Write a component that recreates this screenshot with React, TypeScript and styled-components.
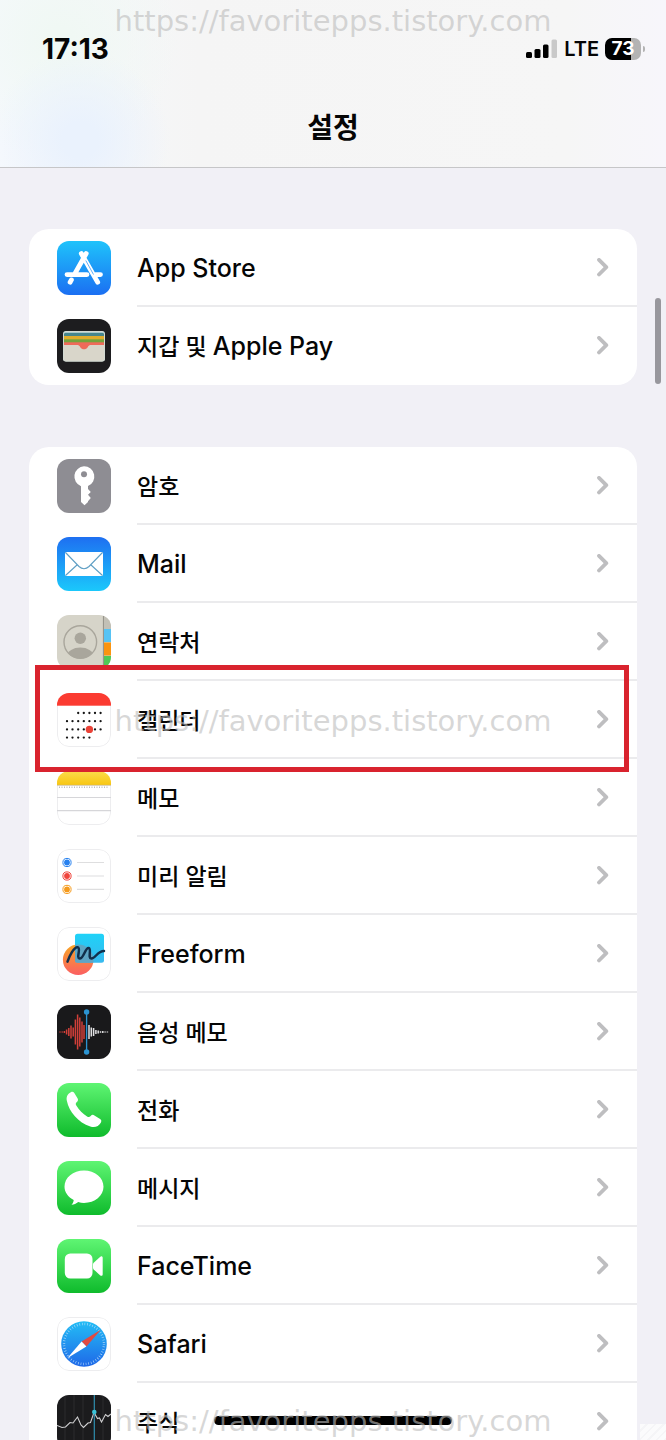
import React from "react";
import styled, { createGlobalStyle } from "styled-components";

const GlobalStyle = createGlobalStyle`
  * { box-sizing: border-box; }
  body {
    margin: 0;
    background: #f1f0f6;
    color: #050505;
    font-family: Inter, "Noto Sans CJK KR", sans-serif;
  }
`;

const Screen = styled.div`
  position: relative;
  display: flex;
  flex-direction: column;
  height: 100vh;
  overflow: hidden;
`;

const Header = styled.header`
  flex: none;
  border-bottom: 1px solid #c6c6c8;
  background:
    radial-gradient(ellipse 90px 90px at 80px 140px, #eaf2fd 20%, rgba(234, 242, 253, 0) 100%),
    radial-gradient(ellipse 120px 120px at 60px 40px, #f0f8f4 10%, rgba(240, 248, 244, 0) 100%),
    linear-gradient(90deg, #f6f9fd, #f5f5f5 30%, #f6f6f6 85%, #f7f6fb);
`;

const StatusBar = styled.div`
  display: flex;
  align-items: center;
  justify-content: space-between;
  height: 98px;
  padding: 0 22px 0 42px;
`;

const Clock = styled.time`
  font-size: 28px;
  line-height: 32px;
  font-weight: 700;
`;

const StatusGroup = styled.div`
  display: flex;
  align-items: center;
  gap: 6px;
`;

const Network = styled.span`
  font-size: 20px;
  line-height: 24px;
  font-weight: 600;
`;

const Battery = styled.span`
  position: relative;
  display: flex;
  align-items: center;
  justify-content: center;
  width: 36px;
  height: 22px;
  margin-right: 3px;
  border-radius: 7px;
  background: linear-gradient(90deg, #000 73%, #b3b3b3 73%);
  color: #fff;
  font-size: 19px;
  line-height: 22px;
  font-weight: 700;

  &::after {
    content: "";
    position: absolute;
    left: 38px;
    top: 8px;
    width: 2px;
    height: 6px;
    border-radius: 0 2px 2px 0;
    background: #b3b3b3;
  }
`;

const Title = styled.h1`
  margin: 0;
  padding: 10px 0 19px;
  font-size: 28px;
  line-height: 40px;
  font-weight: 700;
  text-align: center;
`;

const Main = styled.main`
  flex: 1;
  min-height: 0;
  overflow-y: auto;
  scrollbar-width: none;
  display: flex;
  flex-direction: column;
  gap: 62px;
  padding: 61px 29px;
`;

const Card = styled.ul`
  flex: none;
  list-style: none;
  margin: 0;
  padding: 0;
  border-radius: 20px;
  background: #fff;
`;

const Item = styled.li<{ $marked?: boolean }>`
  position: relative;

  ${(p) =>
    p.$marked &&
    `&::after {
      content: "";
      position: absolute;
      z-index: 1;
      inset: -16px 8px -13px 6px;
      border: 5px solid #d9232e;
      pointer-events: none;
    }`}
`;

const RowLink = styled.a`
  display: flex;
  align-items: center;
  gap: 26px;
  height: 78px;
  padding-left: 28px;
  color: inherit;
  text-decoration: none;
`;

const Tile = styled.svg`
  flex: none;
  width: 54px;
  height: 54px;
  border-radius: 12px;
`;

const RowBody = styled.span`
  flex: 1;
  align-self: stretch;
  display: flex;
  align-items: center;
  justify-content: space-between;
  padding: 2px 28px 0 0;
  border-bottom: 2px solid #ebebed;

  ${Item}:last-child & {
    border-bottom-color: transparent;
  }
`;

const Label = styled.span`
  font-size: 25px;
  line-height: 32px;
  font-weight: 500;
`;

const Hangul = styled.span`
  font-size: 23px;
`;

const ScrollThumb = styled.div`
  position: absolute;
  top: 298px;
  right: 5px;
  width: 6px;
  height: 86px;
  border-radius: 3px;
  background: #98979d;
`;

const HomeBar = styled.div`
  position: absolute;
  bottom: 15px;
  left: 50%;
  width: 238px;
  height: 9px;
  margin-left: -119px;
  border-radius: 5px;
  background: #000;
`;

const CornerPatch = styled.div`
  position: absolute;
  right: 0;
  bottom: 0;
  width: 26px;
  height: 16px;
  background: repeating-linear-gradient(135deg, #fbfbfc 0 4px, #f5f5f7 4px 6px);
`;

const Watermarks = styled.div`
  position: absolute;
  z-index: 2;
  inset: 0;
  display: flex;
  flex-direction: column;
  align-items: center;
  justify-content: space-between;
  padding: 3px 0 1px;
  pointer-events: none;
  color: rgba(188, 188, 188, 0.6);
  font-family: "DejaVu Sans", sans-serif;
  font-size: 29px;
  line-height: 36px;
`;

const Gradient = ({ id, from, to }: { id: string; from: string; to: string }) => (
  <defs>
    <linearGradient id={id} x1="0" y1="0" x2="0" y2="1">
      <stop offset="0" stopColor={from} />
      <stop offset="1" stopColor={to} />
    </linearGradient>
  </defs>
);

const Outline = () => (
  <rect x="0.5" y="0.5" width="53" height="53" rx="11.5" fill="none" stroke="#ededef" />
);

const AppStoreIcon = () => (
  <>
    <Gradient id="appstore" from="#1fc3fb" to="#1b6ff2" />
    <rect width="54" height="54" fill="url(#appstore)" />
    <g stroke="#fff" strokeWidth="4.8" strokeLinecap="round" fill="none">
      <path d="M29.2 12.5 18 32.400M14.400 38.900l-1.300 2.300M24.300 12.500l16.400 28.700M10 33.600h20M38.500 33.600H43.500" />
    </g>
    <path d="M28.800 19.500 36.500 33.500" stroke="#208cf7" strokeWidth="0.700" />
  </>
);

const WalletIcon = () => (
  <>
    <rect width="54" height="54" fill="#1d1d1f" />
    <clipPath id="wallet"><rect x="6" y="12" width="42" height="30.5" rx="3" /></clipPath>
    <g clipPath="url(#wallet)">
      <rect x="6" y="12" width="42" height="31" fill="#a9c8ca" />
      <rect x="7" y="14" width="40" height="4" rx="1" fill="#46868c" />
      <rect x="7" y="17" width="40" height="4" fill="#e0ad2b" />
      <rect x="7" y="20.3" width="40" height="4" fill="#74a33c" />
      <rect x="7" y="23.3" width="40" height="9" fill="#ef6a5a" />
      <path d="M6 26h14.5c1.6 0 2 1 2.8 2.2 1.8 2.8 5.6 2.8 7.4 0C31.500 27 32 26 33.500 26H48v17H6z" fill="#d9d6ca" />
      <rect x="6.500" y="12.500" width="41" height="29.500" rx="2.500" fill="none" stroke="#d3dad2" />
    </g>
  </>
);

const KeyIcon = () => (
  <>
    <rect width="54" height="54" fill="#8e8d93" />
    <path d="M27 7.300a10.300 10.300 0 0 1 4 19.800V30l2.800 2.900-2.800 2.900 2.800 3.100-2.800 3.300v.8L27.500 46.300 24 43V27.200A10.300 10.300 0 0 1 27 7.300z" fill="#fff" />
    <circle cx="27" cy="15.300" r="3" fill="#8e8d93" />
  </>
);

const MailIcon = () => (
  <>
    <Gradient id="mail" from="#1e6ff1" to="#1bc8fb" />
    <rect width="54" height="54" fill="url(#mail)" />
    <rect x="8" y="15" width="38" height="24" rx="1.500" fill="#fff" />
    <path d="M8.500 15.500 22 29.500c3 2.800 7 2.800 10 0l13.500-14M8.500 38.500 20.500 27.500M45.500 38.500l-12-11" fill="none" stroke="#5f9fc4" strokeWidth="1.100" />
  </>
);

const ContactsIcon = () => (
  <>
    <rect width="54" height="54" fill="#d6d4c9" />
    <clipPath id="contacts"><circle cx="23.300" cy="27" r="16.500" /></clipPath>
    <g fill="#a9a69c">
      <circle cx="23.300" cy="23.300" r="5.700" />
      <ellipse cx="23.300" cy="41" rx="13" ry="8.500" clipPath="url(#contacts)" />
    </g>
    <circle cx="23.300" cy="27" r="16.300" fill="none" stroke="#a9a69c" strokeWidth="1.400" />
    <path d="M46.500 0v54" stroke="#97958c" strokeWidth="1.200" />
    <rect x="47" width="7" height="14" fill="#c2c0b6" />
    <rect x="47" y="14" width="7" height="13" fill="#57c3f4" />
    <rect x="47" y="27.500" width="7" height="13" fill="#fb9410" />
    <rect x="47" y="41" width="7" height="13" fill="#4fca56" />
  </>
);

const columns = [10, 15.5, 21.2, 26.8, 32.4, 38, 43.6];
const weeks = [
  { y: 20, from: 2, to: 6 },
  { y: 28.2, from: 0, to: 6 },
  { y: 36.4, from: 0, to: 6 },
  { y: 44.6, from: 0, to: 4 },
];

const CalendarIcon = () => (
  <>
    <rect width="54" height="54" fill="#fff" />
    <Outline />
    <rect width="54" height="12.700" fill="#fb3b31" />
    {weeks.map((w) =>
      columns.slice(w.from, w.to + 1).map((x) => (
        <circle key={`${x}-${w.y}`} cx={x} cy={w.y} r="1.150" fill="#151515" />
      ))
    )}
    <circle cx="32.400" cy="36.400" r="3.700" fill="#ea4237" />
  </>
);

const NotesIcon = () => (
  <>
    <Gradient id="notes" from="#fbdc4c" to="#f8c712" />
    <rect width="54" height="54" fill="#fff" />
    <Outline />
    <rect width="54" height="14" fill="url(#notes)" />
    <path d="M0 14.300h54" stroke="#c9b98a" strokeWidth="0.800" />
    <path d="M2 16.300h50" stroke="#bdbdbd" strokeWidth="1.600" strokeDasharray="1 1.500" />
    <path d="M0 26.500h54M0 39.600h54" stroke="#d6d6d9" strokeWidth="1.200" />
  </>
);

const RemindersIcon = () => (
  <>
    <rect width="54" height="54" fill="#fff" />
    <Outline />
    {[["#2680ef", 13.5], ["#f0443c", 27], ["#f59a1c", 40.4]].map(([color, y]) => (
      <g key={color}>
        <circle cx="10" cy={y} r="4.100" fill="none" stroke={color as string} strokeWidth="1" />
        <circle cx="10" cy={y} r="2.900" fill={color as string} />
        <path d={`M20 ${y}h27`} stroke="#dededf" strokeWidth="1.200" />
      </g>
    ))}
  </>
);

const FreeformIcon = () => (
  <>
    <Gradient id="ffsquare" from="#1fd2f8" to="#38b9ee" />
    <Gradient id="ffcircle" from="#f8a625" to="#fb5f62" />
    <rect width="54" height="54" fill="#fff" />
    <Outline />
    <circle cx="21.200" cy="32.700" r="15.300" fill="url(#ffcircle)" />
    <rect x="18" y="6.800" width="29" height="29" rx="2.500" fill="url(#ffsquare)" />
    <clipPath id="ffclip"><rect x="18" y="6.800" width="29" height="29" rx="2.500" /></clipPath>
    <circle cx="21.200" cy="32.700" r="15.300" fill="#6d9cb6" opacity="0.750" clipPath="url(#ffclip)" />
    <path d="M10.500 34.600C12 30 17 19.500 20.700 20.200c3.800.8-2 11 2 11.300 4 .2 5.500-11.200 9-10.500 3.200.7-1.200 10.200 2.600 10.500 4 .3 6-7.500 12.700-7.500" fill="none" stroke="#12304c" strokeWidth="2.500" strokeLinecap="round" />
  </>
);

const redBars = [[3, 1], [5.2, 1], [7.4, 2], [9.6, 5], [11.800, 8], [14, 13], [16.200, 9], [18.400, 25], [20.600, 35], [22.800, 29], [25, 21], [27, 14]];
const whiteBars = [[32, 14], [34.300, 9], [36.600, 8], [38.900, 4], [41.200, 3], [43.500, 1.500], [45.800, 2], [48.100, 1], [50.400, 1]];

const VoiceIcon = () => (
  <>
    <rect width="54" height="54" fill="#19191b" />
    {redBars.map(([x, h]) => (
      <path key={x} d={`M${x} ${27 - h / 2}v${h}`} stroke="#d23f39" strokeWidth="1.500" />
    ))}
    {whiteBars.map(([x, h]) => (
      <path key={x} d={`M${x} ${27 - h / 2}v${h}`} stroke="#e2e2e4" strokeWidth="1.500" />
    ))}
    <path d="M29.600 7v40" stroke="#2b93d1" strokeWidth="1.300" />
    <circle cx="29.600" cy="7" r="2.700" fill="#2b93d1" />
    <circle cx="29.600" cy="47" r="2.700" fill="#2b93d1" />
  </>
);

const PhoneIcon = () => (
  <>
    <Gradient id="phone" from="#5ff573" to="#0fbb2c" />
    <rect width="54" height="54" fill="url(#phone)" />
    <path d="M13.800 9.200c1.500-.8 2.600-.5 3.500.8l3.200 5.200c.9 1.400.5 2.700-.6 3.700-1.300 1.200-1.500 2-.6 3.500 2.700 4.400 6.600 8.300 10.800 11 1.500 1 2.400.8 3.600-.5 1-1.100 2.300-1.400 3.700-.5l5.700 3.700c1.300.9 1.600 2.100.7 3.600-2.200 3.700-5.800 5.200-10.500 3.800C21.400 39.900 12 28.800 9.900 18.100c-.9-4.300.5-7 3.900-8.900z" fill="#fff" />
  </>
);

const MessagesIcon = () => (
  <>
    <Gradient id="messages" from="#5ff573" to="#0fbb2c" />
    <rect width="54" height="54" fill="url(#messages)" />
    <path d="M27 9.500c10.900 0 19.500 7.200 19.500 16.200S37.900 41.900 27 41.900c-2 0-4-.2-5.800-.8-1.900 1.500-4.300 2.600-6.700 2.700 1.400-1.200 2.100-3 2.200-4.800-5.600-2.900-9.200-7.800-9.200-13.300C7.500 16.700 16.100 9.500 27 9.500z" fill="#fff" />
  </>
);

const FaceTimeIcon = () => (
  <>
    <Gradient id="facetime" from="#5ff573" to="#0fbb2c" />
    <rect width="54" height="54" fill="url(#facetime)" />
    <rect x="7.800" y="14.500" width="27.700" height="25" rx="5.500" fill="#fff" />
    <path d="M36.700 23.700l6.300-5.800c1.300-1.100 2.700-.7 2.700 1v16.300c0 1.700-1.400 2.100-2.700 1l-6.300-5.800c-.5-.5-.7-1-.7-1.700v-3.300c0-.7.2-1.200.7-1.700z" fill="#fff" />
  </>
);

const SafariIcon = () => (
  <>
    <Gradient id="safari" from="#23bdf5" to="#1f68e8" />
    <rect width="54" height="54" fill="#fff" />
    <Outline />
    <circle cx="27" cy="27" r="22.800" fill="url(#safari)" />
    <circle cx="27" cy="27" r="20" fill="none" stroke="#b9defa" strokeWidth="2.400" strokeDasharray="0.600 2.018" />
    <path d="M43.800 12.800 29.400 29.600 24.600 24.600z" fill="#e04a43" />
    <path d="M10.200 41.200 24.600 24.600l4.800 5z" fill="#fff" />
  </>
);

const StocksIcon = () => (
  <>
    <rect width="54" height="54" fill="#1b1b1d" />
    <path d="M8 0v54M17 0v54M26 0v54M46 0v54" stroke="#2c2c2f" strokeWidth="1" />
    <path d="M0 30.500 5 32.500 8.500 32l4.500-4.500 3 .5 4.500-6 3.500 8 2.500 2.500 4.500-4.500 2.500-.5 3.500-10 3.500 6 2-.5 2 4 4-7.500 2.500 2L54 19" fill="none" stroke="#cfcfd1" strokeWidth="1.100" />
    <path d="M37.300 0v54" stroke="#2f8fae" strokeWidth="1.200" />
    <circle cx="37.300" cy="17" r="2.300" fill="#3cc3d8" />
  </>
);

const Chevron = () => (
  <svg width="12" height="20" viewBox="0 0 12 20" aria-hidden="true">
    <path d="M2 1.900 9.300 9.200l-7.300 7.300" fill="none" stroke="#bebec0" strokeWidth="3.800" strokeLinecap="round" strokeLinejoin="round" />
  </svg>
);

const Signal = () => (
  <svg width="32" height="20" viewBox="0 0 32 20" aria-label="신호">
    <rect x="0" y="13" width="6" height="6" rx="1.500" />
    <rect x="8.500" y="10" width="6" height="9" rx="1.500" />
    <rect x="17" y="5.500" width="5.500" height="13.500" rx="1.500" />
    <rect x="25.500" y="0.500" width="5.500" height="18.500" rx="1.500" fill="#c9c9c9" />
  </svg>
);

type Entry = { label: string; Icon: React.ComponentType; marked?: boolean };

const groups: Entry[][] = [
  [
    { label: "App Store", Icon: AppStoreIcon },
    { label: "지갑 및 Apple Pay", Icon: WalletIcon },
  ],
  [
    { label: "암호", Icon: KeyIcon },
    { label: "Mail", Icon: MailIcon },
    { label: "연락처", Icon: ContactsIcon },
    { label: "캘린더", Icon: CalendarIcon, marked: true },
    { label: "메모", Icon: NotesIcon },
    { label: "미리 알림", Icon: RemindersIcon },
    { label: "Freeform", Icon: FreeformIcon },
    { label: "음성 메모", Icon: VoiceIcon },
    { label: "전화", Icon: PhoneIcon },
    { label: "메시지", Icon: MessagesIcon },
    { label: "FaceTime", Icon: FaceTimeIcon },
    { label: "Safari", Icon: SafariIcon },
    { label: "주식", Icon: StocksIcon },
  ],
];

// Hangul glyphs run larger than Latin ones at equal size, so they get their own span.
const renderLabel = (text: string) =>
  text
    .split(/([가-힣][가-힣 ]*)/)
    .filter(Boolean)
    .map((part) => (/[가-힣]/.test(part) ? <Hangul key={part}>{part}</Hangul> : part));

const site = "https://favoritepps.tistory.com";

export default function App() {
  return (
    <Screen>
      <GlobalStyle />
      <Header>
        <StatusBar>
          <Clock>17:13</Clock>
          <StatusGroup>
            <Signal />
            <Network>LTE</Network>
            <Battery>73</Battery>
          </StatusGroup>
        </StatusBar>
        <Title>설정</Title>
      </Header>
      <Main>
        {groups.map((group) => (
          <Card key={group[0].label}>
            {group.map(({ label, Icon, marked }) => (
              <Item key={label} $marked={marked}>
                <RowLink href="#">
                  <Tile viewBox="0 0 54 54" aria-hidden="true">
                    <Icon />
                  </Tile>
                  <RowBody>
                    <Label>{renderLabel(label)}</Label>
                    <Chevron />
                  </RowBody>
                </RowLink>
              </Item>
            ))}
          </Card>
        ))}
      </Main>
      <ScrollThumb />
      <HomeBar />
      <CornerPatch />
      <Watermarks aria-hidden="true">
        <span>{site}</span>
        <span>{site}</span>
        <span>{site}</span>
      </Watermarks>
    </Screen>
  );
}
